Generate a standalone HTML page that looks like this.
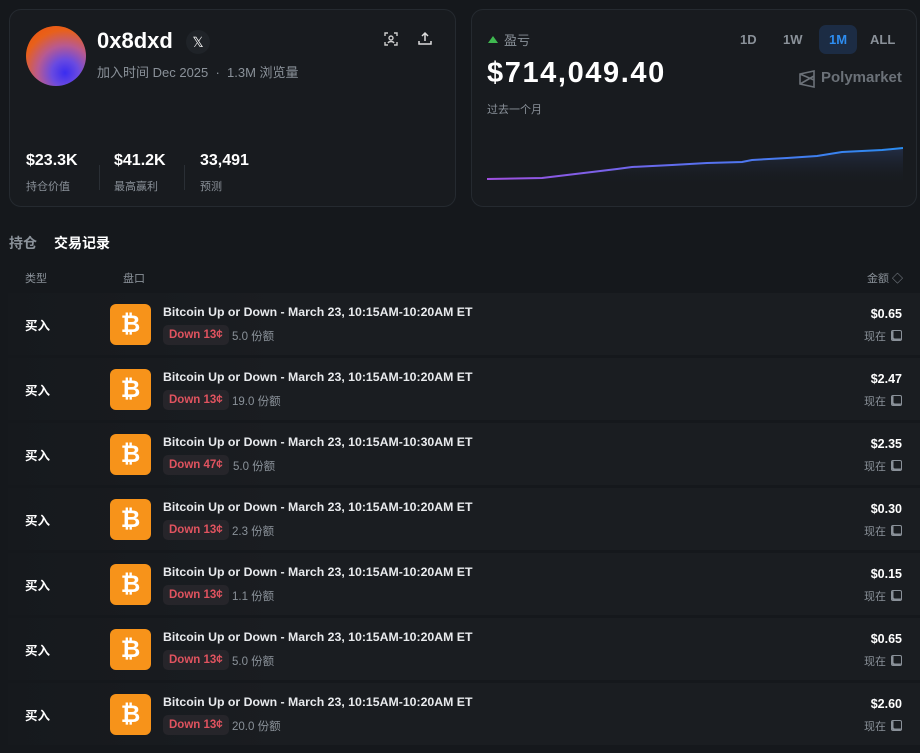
<!DOCTYPE html>
<html><head><meta charset="utf-8"><style>
*{box-sizing:border-box;margin:0;padding:0}
body{width:920px;height:753px;background:#15181c;font-family:"Liberation Sans","Noto Sans CJK SC",sans-serif;color:#fff;position:relative;overflow:hidden}
.card{position:absolute;background:#181b1f;border:1px solid #252a30;border-radius:12px}
.abs{position:absolute}
.gray{color:#8a9199}
.row{position:absolute;left:8px;width:912px;height:62px;background:linear-gradient(90deg,#16191d,#1a1d21 30%);}
.row .t{position:absolute;left:17px;top:22px;font-size:12.5px;font-weight:bold}
.row .ic{position:absolute;left:102px;top:11px;width:41px;height:41px;border-radius:6px;background:#f7931a;color:#fff;font-size:24px;font-weight:bold;text-align:center;line-height:41px;font-family:"DejaVu Sans",sans-serif}
.row .ti{position:absolute;left:155px;top:12px;font-size:12.3px;font-weight:bold;color:#e8eaed}
.row .bd{position:absolute;left:155px;top:32px;height:20px;padding:0 6px;border-radius:5px;background:#26252a;color:#e0535f;font-size:11.5px;font-weight:bold;line-height:20px}
.row .sh{position:absolute;top:35px;font-size:11.5px;color:#8a9199}
.row .am{position:absolute;right:18px;top:14px;font-size:12.5px;font-weight:bold}
.row .nw{position:absolute;right:18px;top:35px;font-size:11px;color:#8a9199}
.nw i{display:inline-block;width:11px;height:11px;border:1.5px solid #8a9199;border-radius:2px;margin-left:5px;vertical-align:-1px;box-shadow:inset 2px -2px 0 -0.5px #8a9199}
</style></head><body>
<div class="card" style="left:9px;top:9px;width:447px;height:198px">
  <div class="abs" style="left:16px;top:16px;width:60px;height:60px;border-radius:50%;background:radial-gradient(circle at 65% 78%,#3a2cf0 0%,#6a4ae0 22%,#b85a90 45%,#e8601a 70%,#f05008 100%)"></div>
  <div class="abs" style="left:87px;top:18px;font-size:22px;font-weight:bold">0x8dxd</div>
  <div class="abs" style="left:176px;top:20px;width:24px;height:24px;border-radius:50%;background:#1f2328;text-align:center;line-height:24px;font-size:14px">𝕏</div>
  <div class="abs gray" style="left:87px;top:52px;font-size:13px">加入时间 Dec 2025 &nbsp;·&nbsp; 1.3M 浏览量</div>
  <svg class="abs" style="left:374px;top:22px" width="14" height="14" viewBox="0 0 14 14" fill="none" stroke="#ccc" stroke-width="1.4"><path d="M1 4V1h3M10 1h3v3M13 10v3h-3M4 13H1v-3"/><circle cx="7" cy="6" r="2"/><path d="M4 11c1-2 5-2 6 0"/></svg>
  <svg class="abs" style="left:408px;top:21px" width="14" height="15" viewBox="0 0 14 15" fill="none" stroke="#ddd" stroke-width="1.5"><path d="M7 10V2M4 5l3-3 3 3M1 10v3h12v-3"/></svg>
  <div class="abs" style="left:16px;top:142px;font-size:16px;font-weight:bold">$23.3K</div>
  <div class="abs gray" style="left:16px;top:168px;font-size:11px">持仓价值</div>
  <div class="abs" style="left:89px;top:155px;width:1px;height:25px;background:#2a2f35"></div>
  <div class="abs" style="left:104px;top:142px;font-size:16px;font-weight:bold">$41.2K</div>
  <div class="abs gray" style="left:104px;top:168px;font-size:11px">最高赢利</div>
  <div class="abs" style="left:174px;top:155px;width:1px;height:25px;background:#2a2f35"></div>
  <div class="abs" style="left:190px;top:142px;font-size:16px;font-weight:bold">33,491</div>
  <div class="abs gray" style="left:190px;top:168px;font-size:11px">预测</div>
</div>
<div class="card" style="left:471px;top:9px;width:446px;height:198px">
  <div class="abs" style="left:16px;top:26px;width:0;height:0;border-left:5px solid transparent;border-right:5px solid transparent;border-bottom:7px solid #3fb950"></div>
  <div class="abs gray" style="left:32px;top:20px;font-size:13px">盈亏</div>
  <div class="abs gray" style="left:268px;top:22px;font-size:13px;font-weight:bold">1D</div>
  <div class="abs gray" style="left:311px;top:22px;font-size:13px;font-weight:bold">1W</div>
  <div class="abs" style="left:347px;top:15px;width:38px;height:29px;border-radius:7px;background:#1c2c44;color:#2d8cf0;font-size:13px;font-weight:bold;text-align:center;line-height:29px">1M</div>
  <div class="abs gray" style="left:398px;top:22px;font-size:13px;font-weight:bold">ALL</div>
  <div class="abs" style="left:15px;top:47px;font-size:29px;font-weight:bold;letter-spacing:1.6px">$714,049.40</div>
  <svg class="abs" style="left:327px;top:60px" width="16" height="18" viewBox="0 0 16 18" fill="none" stroke="#6b7178" stroke-width="1.6"><path d="M1 4l14-3v16L1 14zM1 4l14 6M15 6L1 14"/></svg>
  <div class="abs" style="left:349px;top:59px;font-size:15px;font-weight:bold;color:#6b7178">Polymarket</div>
  <div class="abs gray" style="left:15px;top:91px;font-size:11px">过去一个月</div>
  <svg class="abs" style="left:15px;top:115px" width="416" height="60" viewBox="0 0 416 60">
    <defs><linearGradient id="lg" x1="0" x2="1"><stop offset="0" stop-color="#a050e0"/><stop offset="0.5" stop-color="#5a70f0"/><stop offset="1" stop-color="#2a8cf0"/></linearGradient>
    <linearGradient id="fg" x1="0" y1="0" x2="0" y2="1"><stop offset="0" stop-color="#2a3a60" stop-opacity="0.6"/><stop offset="1" stop-color="#181b1f" stop-opacity="0"/></linearGradient></defs>
    <path d="M0 54L55 53L80 50L130 44L145 42L185 40L220 38L255 37L265 35L300 33L330 31L355 27L395 25L416 23L416 60L0 60Z" fill="url(#fg)"/>
    <path d="M0 54L55 53L80 50L130 44L145 42L185 40L220 38L255 37L265 35L300 33L330 31L355 27L395 25L416 23" fill="none" stroke="url(#lg)" stroke-width="2"/>
  </svg>
</div>
<div class="abs" style="left:9px;top:233px;font-size:14px;font-weight:bold;color:#8a9199">持仓</div>
<div class="abs" style="left:54px;top:233px;font-size:14px;font-weight:bold">交易记录</div>
<div class="abs gray" style="left:25px;top:270px;font-size:11px">类型</div>
<div class="abs gray" style="left:123px;top:270px;font-size:11px">盘口</div>
<div class="abs gray" style="left:867px;top:270px;font-size:11px">金额 ◇</div>
<div class="row" style="top:293px"><div class="t">买入</div><div class="ic">₿</div><div class="ti">Bitcoin Up or Down - March 23, 10:15AM-10:20AM ET</div><div class="bd">Down 13¢</div><div class="sh" style="left:224px">5.0 份额</div><div class="am">$0.65</div><div class="nw">现在<i></i></div></div>
<div class="row" style="top:358px"><div class="t">买入</div><div class="ic">₿</div><div class="ti">Bitcoin Up or Down - March 23, 10:15AM-10:20AM ET</div><div class="bd">Down 13¢</div><div class="sh" style="left:224px">19.0 份额</div><div class="am">$2.47</div><div class="nw">现在<i></i></div></div>
<div class="row" style="top:423px"><div class="t">买入</div><div class="ic">₿</div><div class="ti">Bitcoin Up or Down - March 23, 10:15AM-10:30AM ET</div><div class="bd">Down 47¢</div><div class="sh" style="left:225px">5.0 份额</div><div class="am">$2.35</div><div class="nw">现在<i></i></div></div>
<div class="row" style="top:488px"><div class="t">买入</div><div class="ic">₿</div><div class="ti">Bitcoin Up or Down - March 23, 10:15AM-10:20AM ET</div><div class="bd">Down 13¢</div><div class="sh" style="left:224px">2.3 份额</div><div class="am">$0.30</div><div class="nw">现在<i></i></div></div>
<div class="row" style="top:553px"><div class="t">买入</div><div class="ic">₿</div><div class="ti">Bitcoin Up or Down - March 23, 10:15AM-10:20AM ET</div><div class="bd">Down 13¢</div><div class="sh" style="left:224px">1.1 份额</div><div class="am">$0.15</div><div class="nw">现在<i></i></div></div>
<div class="row" style="top:618px"><div class="t">买入</div><div class="ic">₿</div><div class="ti">Bitcoin Up or Down - March 23, 10:15AM-10:20AM ET</div><div class="bd">Down 13¢</div><div class="sh" style="left:224px">5.0 份额</div><div class="am">$0.65</div><div class="nw">现在<i></i></div></div>
<div class="row" style="top:683px"><div class="t">买入</div><div class="ic">₿</div><div class="ti">Bitcoin Up or Down - March 23, 10:15AM-10:20AM ET</div><div class="bd">Down 13¢</div><div class="sh" style="left:224px">20.0 份额</div><div class="am">$2.60</div><div class="nw">现在<i></i></div></div>
</body></html>
